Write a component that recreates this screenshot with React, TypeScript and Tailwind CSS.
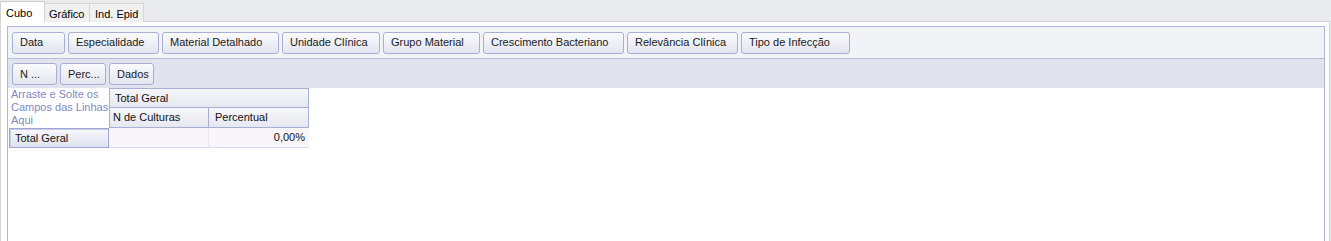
import React from 'react';

const rowOne = [
  { label: 'Data', w: 'w-[53px]' },
  { label: 'Especialidade', w: 'w-[91px]' },
  { label: 'Material Detalhado', w: 'w-[117px]' },
  { label: 'Unidade Clínica', w: 'w-[98px]' },
  { label: 'Grupo Material', w: 'w-[97px]' },
  { label: 'Crescimento Bacteriano', w: 'w-[141px]' },
  { label: 'Relevância Clínica', w: 'w-[111px]' },
  { label: 'Tipo de Infecção', w: 'w-[109px]' },
];

const rowTwo = [
  { label: 'N ...', w: 'w-[45px]' },
  { label: 'Perc...', w: 'w-[46px]' },
  { label: 'Dados', w: 'w-[45px]' },
];

function FieldButton({ label, w }: { label: string; w: string }) {
  return (
    <div
      className={`${w} h-[22px] shrink-0 flex items-center pl-[7px] rounded-[3px] border border-[#a9aed3] bg-gradient-to-b from-[#fbfbfd] to-[#e3e5ef] text-[#1a1a1a] whitespace-nowrap overflow-hidden`}
    >
      {label}
    </div>
  );
}

export default function App() {
  return (
    <div
      className="w-[1331px] h-[241px] bg-[#e9ebef] text-[11px] overflow-hidden flex flex-col"
      style={{ fontFamily: '"Liberation Sans", Arial, sans-serif' }}
    >
      {/* tabs */}
      <div className="h-[22px] flex items-end shrink-0 relative z-10">
        <div className="w-[45px] h-[21px] bg-white border border-b-0 border-[#d0d0d0] pl-[5px] pt-[3px] text-black whitespace-nowrap">Cubo</div>
        <div className="w-[45px] h-[19px] bg-[#f0f0f0] border border-l-0 border-b-0 border-[#d6d6d6] pl-[4px] pt-[2px] text-black whitespace-nowrap">Gráfico</div>
        <div className="w-[54px] h-[19px] bg-[#f0f0f0] border border-l-0 border-b-0 border-[#d6d6d6] pl-[5px] pt-[2px] text-black whitespace-nowrap">Ind. Epid</div>
      </div>

      {/* panel */}
      <div className="w-[1330px] flex-1 -mt-px bg-white border border-b-0 border-[#d4d4d4] pl-[6px] pr-[4px] pt-[4px] flex">
        <div className="flex-1 border-l border-r border-t border-[#b0b4d6] flex flex-col">
          <div className="h-[32px] bg-[#f2f3f7] border-b border-[#b8bbd8] flex items-center gap-[3px] pl-[4px]">
            {rowOne.map((b) => (
              <FieldButton key={b.label} {...b} />
            ))}
          </div>
          <div className="h-[29px] bg-[#e1e3ee] flex items-start pt-[4px] gap-[3px] pl-[4px]">
            {rowTwo.map((b) => (
              <FieldButton key={b.label} {...b} />
            ))}
          </div>

          {/* pivot body */}
          <div className="flex pl-[1px]">
            <div className="flex flex-col">
              <div className="w-[100px] h-[40px] pl-[2px] text-[#8088c4] leading-[13px]">
                Arraste e Solte os Campos das Linhas Aqui
              </div>
              <div className="w-[100px] h-[20px] border border-[#9ea5d4] shadow-[inset_1px_1px_0_#c9cde6] bg-gradient-to-b from-[#f7f8fb] to-[#dfe2ee] pl-[5px] flex items-center text-[#111]">
                Total Geral
              </div>
            </div>
            <div className="flex flex-col">
              <div className="w-[200px] h-[20px] border border-[#a9aed3] bg-gradient-to-b from-[#f6f7fa] to-[#e6e8f0] pl-[5px] flex items-center text-[#111]">
                Total Geral
              </div>
              <div className="flex -mt-px">
                <div className="w-[100px] h-[21px] border border-[#a9aed3] bg-gradient-to-b from-[#f6f7fa] to-[#e6e8f0] pl-[3px] flex items-center text-[#111]">
                  N de Culturas
                </div>
                <div className="w-[100px] h-[21px] border border-l-0 border-[#a9aed3] bg-gradient-to-b from-[#f6f7fa] to-[#e6e8f0] pl-[6px] flex items-center text-[#111]">
                  Percentual
                </div>
              </div>
              <div className="flex">
                <div className="w-[100px] h-[20px] bg-[#f9f5f9] border-b border-[#d8dbf0] border-r border-r-[#ebe7f0]" />
                <div className="w-[100px] h-[20px] bg-[#f9f5f9] border-b border-[#d8dbf0] pr-[4px] flex items-center justify-end text-[#111]">
                  0,00%
                </div>
              </div>
            </div>
          </div>
        </div>
      </div>
    </div>
  );
}
